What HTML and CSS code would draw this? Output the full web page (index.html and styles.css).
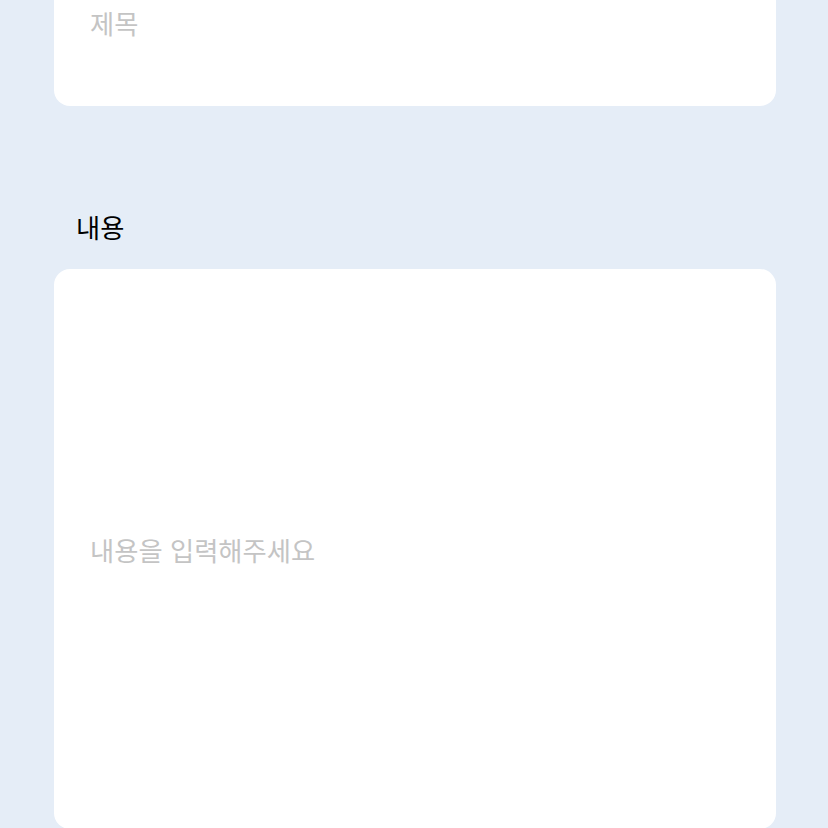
FILE: index.html
```html
<!DOCTYPE html>
<html lang="ko">
<head>
    <meta charset="UTF-8">
    <title>글쓰기</title>
    <link rel="stylesheet" href="styles.css">
</head>
<body>
    <div class="form">
        <div class="field title-field">
            <div class="placeholder">제목</div>
        </div>

        <div class="label">내용</div>
        <div class="field content-field">
            <div class="placeholder">내용을 입력해주세요</div>
        </div>
    </div>
</body>
</html>
```

FILE: styles.css
```css
body {
    font-family: "Noto Sans CJK KR", "Noto Sans", sans-serif;
    background-color: #e5edf7;
    margin: 0;
    overflow: hidden;
}

.form {
    display: flex;
    flex-direction: column;
    padding: 0 52px 0 54px;
}

.field {
    background: white;
    border-radius: 16px;
    padding: 0 36px;
}

.title-field {
    height: 106px;
    border-top-left-radius: 0;
    border-top-right-radius: 0;
}

.title-field .placeholder {
    line-height: 46px;
}

.placeholder {
    color: #c4c4c4;
    font-size: 26.3px;
}

.label {
    font-size: 26.3px;
    color: #000;
    line-height: 36px;
    margin: 103px 0 24px 22px;
}

.content-field {
    height: 560px;
    display: flex;
    align-items: center;
}
```
